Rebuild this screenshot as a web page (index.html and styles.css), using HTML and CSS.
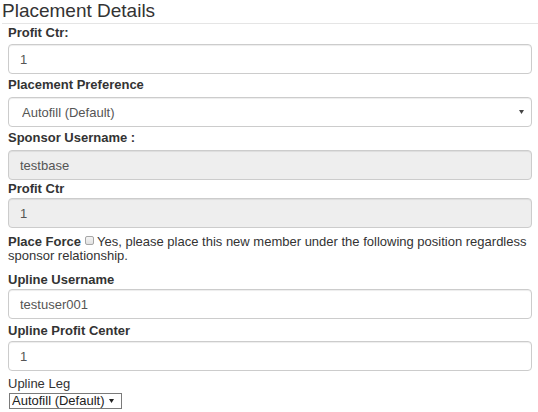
FILE: index.html
```html
<!DOCTYPE html>
<html>
<head>
<meta charset="utf-8">
<title>Placement Details</title>
<link rel="stylesheet" href="styles.css">
</head>
<body>
<div class="panel">
  <h2 class="title">Placement Details</h2>
  <div class="rule"></div>
  <div class="fields">
    <label class="lbl lbl-1">Profit Ctr:</label>
    <input class="ctl ctl-1" type="text" value="1">

    <label class="lbl lbl-2">Placement Preference</label>
    <div class="sel-wrap">
      <select class="ctl sel">
        <option>Autofill (Default)</option>
      </select>
    </div>

    <label class="lbl lbl-3">Sponsor Username :</label>
    <input class="ctl ctl-dis" type="text" value="testbase" readonly>

    <label class="lbl lbl-4">Profit Ctr</label>
    <input class="ctl ctl-dis" type="text" value="1" readonly>

    <p class="force"><b>Place Force</b> <input class="chk" type="checkbox"> Yes, please place this new member under the following position regardless sponsor relationship.</p>

    <label class="lbl lbl-5">Upline Username</label>
    <input class="ctl" type="text" value="testuser001">

    <label class="lbl lbl-6">Upline Profit Center</label>
    <input class="ctl ctl-6" type="text" value="1">

    <div class="leg-label">Upline Leg</div>
    <div class="mini-wrap">
      <select class="mini">
        <option>Autofill (Default)</option>
      </select>
    </div>
  </div>
</div>
</body>
</html>
```
FILE: styles.css
```css
html, body {
  margin: 0;
  padding: 0;
  background: #ffffff;
}
body {
  font-family: "Liberation Sans", Arial, sans-serif;
  font-size: 13px;
  color: #333333;
}
.panel {
  padding-left: 2px;
}
.title {
  margin: 0;
  font-size: 19px;
  line-height: 21px;
  font-weight: normal;
  color: #333333;
}
.rule {
  margin-top: 2px;
  height: 0;
  border-top: 1px solid #e5e5e5;
}
.fields {
  padding: 0 6px 0 6px;
}
.lbl {
  display: block;
  font-weight: bold;
  line-height: 18px;
}
.lbl-1 { margin-bottom: 2px; }
.lbl-2 { margin-top: 2px; margin-bottom: 3px; }
.lbl-3 { margin-top: 2px; margin-bottom: 3px; }
.lbl-4 { margin-top: 0; margin-bottom: 0; }
.lbl-5 { margin-top: 8px; margin-bottom: 0; }
.lbl-6 { margin-top: 3px; margin-bottom: 1px; }

.ctl {
  display: block;
  box-sizing: border-box;
  width: 100%;
  height: 30px;
  margin: 0;
  padding: 0 11px;
  border: 1px solid #cccccc;
  border-radius: 4px;
  box-shadow: inset 0 1px 1px rgba(0, 0, 0, 0.075);
  background: #ffffff;
  font-family: "Liberation Sans", Arial, sans-serif;
  font-size: 13px;
  color: #555555;
  outline: none;
}
.ctl-dis {
  background: #eeeeee;
}
.sel-wrap {
  position: relative;
}
.sel {
  -webkit-appearance: none;
  appearance: none;
  padding-left: 13px;
}
.sel-wrap::after {
  content: "";
  position: absolute;
  right: 8px;
  top: 50%;
  width: 5px;
  height: 4px;
  margin-top: -2px;
  background: #444444;
  clip-path: polygon(0 0, 100% 0, 50% 100%);
}
.force {
  margin: 7px 0 0 0;
  line-height: 14px;
}
.chk {
  -webkit-appearance: none;
  appearance: none;
  display: inline-block;
  box-sizing: border-box;
  width: 9px;
  height: 9px;
  margin: 0 0 1px 0;
  border: 1px solid #a6a6a6;
  border-radius: 2px;
  background: linear-gradient(#f4f4f4, #e2e2e2);
  vertical-align: baseline;
}
.leg-label {
  margin-top: 4px;
  line-height: 18px;
}
.mini-wrap {
  position: relative;
  display: inline-block;
  margin: 0 0 0 1px;
}
.mini {
  -webkit-appearance: none;
  appearance: none;
  display: block;
  box-sizing: border-box;
  height: 16px;
  margin: 0;
  padding: 0 16px 0 2px;
  border: 1px solid #7a7a7a;
  border-radius: 0;
  background: #ffffff;
  font-family: "Liberation Sans", Arial, sans-serif;
  font-size: 13px;
  line-height: 14px;
  color: #222222;
  outline: none;
}
.mini-wrap::after {
  content: "";
  position: absolute;
  right: 8px;
  top: 50%;
  width: 5px;
  height: 4px;
  margin-top: -2px;
  background: #222222;
  clip-path: polygon(0 0, 100% 0, 50% 100%);
}
```
